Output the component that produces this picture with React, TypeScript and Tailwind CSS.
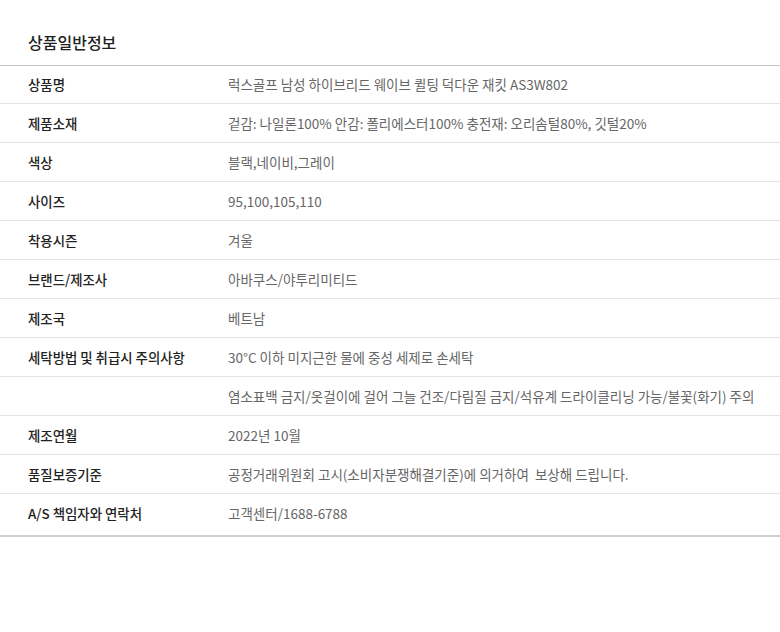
import React from "react";

const rows: [string, string][] = [
  ["상품명", "럭스골프 남성 하이브리드 웨이브 퀼팅 덕다운 재킷 AS3W802"],
  ["제품소재", "겉감: 나일론100% 안감: 폴리에스터100% 충전재: 오리솜털80%, 깃털20%"],
  ["색상", "블랙,네이비,그레이"],
  ["사이즈", "95,100,105,110"],
  ["착용시즌", "겨울"],
  ["브랜드/제조사", "아바쿠스/야투리미티드"],
  ["제조국", "베트남"],
  ["세탁방법 및 취급시 주의사항", "30°C 이하 미지근한 물에 중성 세제로 손세탁"],
  ["", "염소표백 금지/옷걸이에 걸어 그늘 건조/다림질 금지/석유계 드라이클리닝 가능/불꽃(화기) 주의"],
  ["제조연월", "2022년 10월"],
  ["품질보증기준", "공정거래위원회 고시(소비자분쟁해결기준)에 의거하여  보상해 드립니다."],
  ["A/S 책임자와 연락처", "고객센터/1688-6788"],
];

export default function App() {
  return (
    <div
      className="w-[780px] h-[632px] bg-white"
      style={{ fontFamily: '"Noto Sans CJK KR", "Noto Sans", sans-serif' }}
    >
      <div className="pl-[28px] pt-[30px] h-[65px] text-[16px] leading-[24px] font-medium text-[#222]">
        상품일반정보
      </div>
      <div className="border-t border-[#c4c4c4] border-b-2 border-b-[#cfcfcf]">
        {rows.map(([k, v], i) => (
          <div
            key={i}
            className={`flex items-center ${i === 0 ? "h-[38px] border-b border-[#e4e4e4]" : i < rows.length - 1 ? "h-[39px] border-b border-[#e4e4e4]" : "h-[41px] pb-[2px]"}`}
          >
            <div className="w-[228px] pl-[28px] shrink-0 text-[13.4px] font-medium text-[#222]">
              {k}
            </div>
            <div className="text-[13.5px] text-[#666] whitespace-pre">{v}</div>
          </div>
        ))}
      </div>
    </div>
  );
}
